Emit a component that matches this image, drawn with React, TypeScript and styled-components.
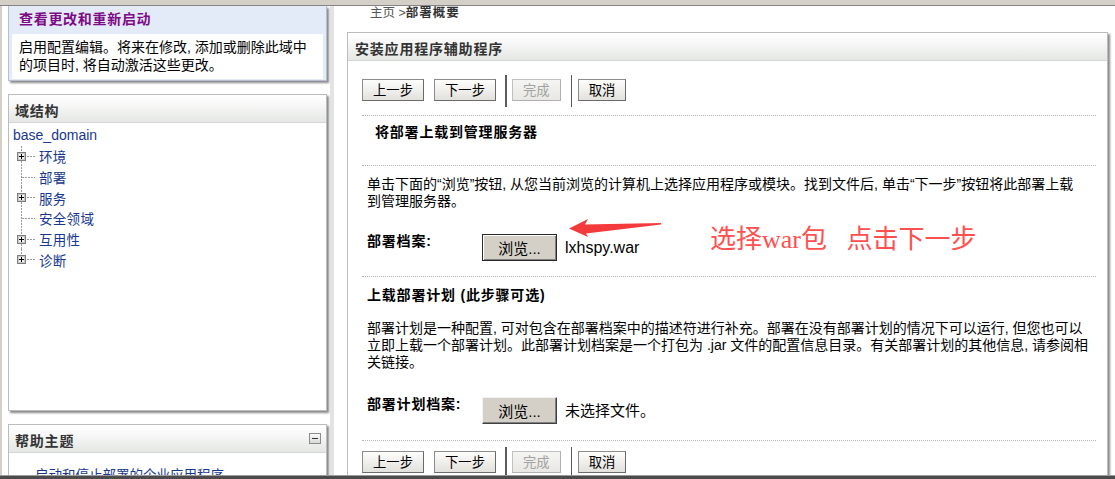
import React from "react";
import styled, { createGlobalStyle } from "styled-components";

const GlobalStyle = createGlobalStyle`
  html, body { margin: 0; padding: 0; background: #fff; }
  body {
    font-family: "Liberation Sans", "Noto Sans CJK SC", sans-serif;
    font-size: 14px;
    color: #000;
    overflow: hidden;
  }
  * { box-sizing: border-box; }
`;

const Page = styled.div`
  width: 1115px;
  height: 479px;
  display: flex;
  flex-direction: column;
  overflow: hidden;
  background: #fff;
`;

const TopBar = styled.div`
  flex: none;
  height: 6px;
  background: #d4d0c8;
  border-bottom: 1px solid #858585;
`;

const Workspace = styled.div`
  flex: 1;
  min-height: 0;
  display: flex;
`;

const BottomEdge = styled.div`
  flex: none;
  height: 4px;
  background: #4b4b4b;
  border-top: 1px solid #9a9a9a;
`;

const LeftFrame = styled.aside`
  flex: none;
  width: 330px;
  border-left: 2px solid #d4d0c8;
  padding: 0 3px 0 6px;
  display: flex;
  flex-direction: column;
  gap: 13px;
  overflow: hidden;
`;

const Splitter = styled.div`
  flex: none;
  width: 4px;
  background: #e3e3e3;
`;

const Content = styled.main`
  flex: 1;
  min-width: 0;
  padding: 0 7px 0 13px;
  display: flex;
  flex-direction: column;
  overflow: hidden;
`;

/* ---------- panels ---------- */

const Panel = styled.section`
  flex: none;
  background: #fff;
  border: 1px solid #b9bdbd;
  box-shadow: 2px 2px 2px #8a8a8a;
`;

const ChangePanel = styled.section`
  flex: none;
  background: #e4ebf8;
  border: 1px solid #b6bfd0;
  border-top: none;
  padding: 0 3px 1px 3px;
  box-shadow: 2px 2px 2px #8a8a8a;
`;

const ChangeTitle = styled.h2`
  margin: 0;
  height: 28px;
  padding: 0 0 0 7px;
  line-height: 26px;
  font-size: 14px;
  font-weight: bold;
  letter-spacing: 0.7px;
  color: #7d0a86;
`;

const ChangeBody = styled.div`
  background: #fff;
  padding: 4px 0 5px 7px;
  line-height: 18px;
  font-size: 14px;
  white-space: nowrap;
`;

const PanelHeader = styled.header<{ $pad?: number }>`
  height: 28px;
  display: flex;
  align-items: center;
  justify-content: space-between;
  padding: 0 5px 0 ${(p) => p.$pad ?? 6}px;
  background: linear-gradient(#ffffff, #f7f8f7 35%, #e5e7e4);
  border-bottom: 1px solid #d3d6d4;
`;

const HeaderTitle = styled.h2`
  margin: 0;
  font-size: 14px;
  font-weight: bold;
  letter-spacing: 0.8px;
  color: #333;
  padding-top: 2px;
`;

const CollapseBox = styled.span`
  position: relative;
  width: 12px;
  height: 11px;
  border: 1px solid #8b8b8b;
  background: linear-gradient(#fafafa, #d9d9d9);
  &::after {
    content: "";
    position: absolute;
    left: 2px;
    right: 2px;
    top: 4px;
    height: 1px;
    background: #333;
  }
`;

const TreeBody = styled.div`
  height: 287px;
  padding: 2px 0 0 4px;
`;

const TreeRoot = styled.div`
  height: 21px;
  line-height: 21px;
  font-size: 14px;
  color: #17388f;
`;

const TreeRow = styled.div`
  height: 20.7px;
  display: flex;
  align-items: center;
  margin-left: -1px;
  font-size: 13.5px;
  letter-spacing: 0.3px;
  color: #17388f;
  svg { display: block; flex: none; overflow: visible; }
`;

const HelpBody = styled.div`
  height: 60px;
  padding: 14px 0 0 26px;
  line-height: 17px;
  font-size: 13.5px;
  color: #17388f;
`;

/* ---------- right side ---------- */

const Breadcrumb = styled.nav`
  flex: none;
  height: 26px;
  padding-left: 23px;
  line-height: 14px;
  font-size: 12.5px;
  color: #555;
  b {
    color: #333;
    letter-spacing: 1px;
  }
`;

const WizardPanel = styled(Panel)`
  flex: 1;
  min-height: 0;
  border-bottom: none;
`;

const WizardBody = styled.div`
  padding: 0 11px 0 14px;
`;

const Toolbar = styled.div<{ $top: number }>`
  display: flex;
  align-items: flex-start;
  height: 32px;
  margin-top: ${(p) => p.$top}px;
`;

const WizButton = styled.button<{ $disabled?: boolean }>`
  margin-top: 4px;
  height: 22px;
  padding: 0 10px;
  font-family: "Liberation Sans", "Noto Sans CJK SC", sans-serif;
  font-size: 13.33px;
  line-height: 19px;
  color: ${(p) => (p.$disabled ? "#a2a2a2" : "#000")};
  background: ${(p) =>
    p.$disabled
      ? "linear-gradient(#f5f5f3, #e8e7e3)"
      : "linear-gradient(#fdfdfc, #e2e1dc)"};
  border: 1px solid ${(p) => (p.$disabled ? "#c0c0c0" : "#8c8c8c")};
  border-bottom-color: ${(p) => (p.$disabled ? "#b0b0b0" : "#6a6a6a")};
  border-right-color: ${(p) => (p.$disabled ? "#b0b0b0" : "#6a6a6a")};
  border-radius: 0;
`;

const ToolSep = styled.span<{ $w: number; $ml: number; $mr: number }>`
  flex: none;
  width: ${(p) => p.$w}px;
  height: 32px;
  background: #5c5c5c;
  margin: 0 ${(p) => p.$mr}px 0 ${(p) => p.$ml}px;
`;

const Rule = styled.hr<{ $top: number }>`
  margin: ${(p) => p.$top}px 0 0 0;
  height: 0;
  border: none;
  border-top: 1px dotted #b5b5b5;
`;

const SectionTitle = styled.h3<{ $top: number; $indent: number }>`
  margin: ${(p) => p.$top}px 0 0 0;
  padding-left: ${(p) => p.$indent}px;
  font-size: 14px;
  line-height: 17px;
  font-weight: bold;
  letter-spacing: 0.8px;
  color: #000;
`;

const Paragraph = styled.p<{ $top: number }>`
  margin: ${(p) => p.$top}px 0 0 0;
  padding-left: 5px;
  font-size: 14px;
  line-height: 17px;
  white-space: nowrap;
`;

const FieldRow = styled.div<{ $top: number }>`
  position: relative;
  margin-top: ${(p) => p.$top}px;
  padding-left: 5px;
  display: flex;
  align-items: flex-start;
`;

const FieldLabel = styled.span`
  flex: none;
  width: 115px;
  padding-top: 1px;
  font-size: 14px;
  line-height: 13px;
  font-weight: bold;
  letter-spacing: 0.8px;
`;

const BrowseButton = styled.button<{ $focused?: boolean }>`
  flex: none;
  width: 75px;
  height: 27px;
  padding: 0;
  font-family: "Liberation Sans", "Noto Sans CJK SC", sans-serif;
  font-size: 15px;
  color: #000;
  background: #d4d0c8;
  border: 1px solid;
  border-color: ${(p) =>
    p.$focused ? "#2a2a2a" : "#f2f2f2 #404040 #404040 #f2f2f2"};
  box-shadow: ${(p) =>
    p.$focused
      ? "inset 1px 1px #ffffff, inset -1px -1px #808080"
      : "inset -1px -1px #808080"};
  border-radius: 0;
`;

const FileName = styled.span<{ $latin?: boolean }>`
  margin-left: 8px;
  line-height: 27px;
  font-size: ${(p) => (p.$latin ? 16 : 15)}px;
  color: #000;
`;

const ArrowMark = styled.svg`
  position: absolute;
  left: 204px;
  top: -18px;
`;

const AnnotationText = styled.span`
  position: absolute;
  left: 348px;
  top: -9px;
  line-height: 30px;
  font-size: 26px;
  font-family: "Liberation Serif", "Noto Sans CJK SC", serif;
  color: #ff5050;
  white-space: nowrap;
`;

/* ---------- pieces ---------- */

type TreeItem = { label: string; expandable: boolean };

const treeItems: TreeItem[] = [
  { label: "环境", expandable: true },
  { label: "部署", expandable: false },
  { label: "服务", expandable: true },
  { label: "安全领域", expandable: false },
  { label: "互用性", expandable: true },
  { label: "诊断", expandable: true },
];

function Connector({ expandable, last }: { expandable: boolean; last: boolean }) {
  const dash = "#9a9a9a";
  return (
    <svg width="27" height="21" viewBox="0 0 27 21" shapeRendering="crispEdges">
      <line x1="9.5" y1="0" x2="9.5" y2={last ? 10.5 : 21} stroke={dash} strokeDasharray="2 1" />
      {expandable ? (
        <>
          <line x1="15" y1="10.5" x2="23" y2="10.5" stroke={dash} strokeDasharray="2 1" />
          <rect x="5.5" y="6.5" width="8" height="8" fill="#f2f2f2" stroke="#7f7f7f" />
          <rect x="6.5" y="7.5" width="6" height="6" fill="none" stroke="#c8c8c8" />
          <line x1="7" y1="10.5" x2="12" y2="10.5" stroke="#000" />
          <line x1="9.5" y1="8" x2="9.5" y2="13" stroke="#000" />
        </>
      ) : (
        <line x1="9.5" y1="10.5" x2="23" y2="10.5" stroke={dash} strokeDasharray="2 1" />
      )}
    </svg>
  );
}

function Buttons({ top }: { top: number }) {
  return (
    <Toolbar $top={top}>
      <WizButton>上一步</WizButton>
      <WizButton style={{ marginLeft: 10 }}>下一步</WizButton>
      <ToolSep $w={2} $ml={9} $mr={5} />
      <WizButton $disabled>完成</WizButton>
      <ToolSep $w={1} $ml={10} $mr={6} />
      <WizButton>取消</WizButton>
    </Toolbar>
  );
}

export default function App() {
  return (
    <Page>
      <GlobalStyle />
      <TopBar />
      <Workspace>
        <LeftFrame>
          <ChangePanel>
            <ChangeTitle>查看更改和重新启动</ChangeTitle>
            <ChangeBody>
              启用配置编辑。将来在修改, 添加或删除此域中
              <br />
              的项目时, 将自动激活这些更改。
            </ChangeBody>
          </ChangePanel>

          <Panel>
            <PanelHeader>
              <HeaderTitle>域结构</HeaderTitle>
            </PanelHeader>
            <TreeBody>
              <TreeRoot>base_domain</TreeRoot>
              {treeItems.map((item, i) => (
                <TreeRow key={item.label}>
                  <Connector expandable={item.expandable} last={i === treeItems.length - 1} />
                  {item.label}
                </TreeRow>
              ))}
            </TreeBody>
          </Panel>

          <Panel>
            <PanelHeader>
              <HeaderTitle>帮助主题</HeaderTitle>
              <CollapseBox />
            </PanelHeader>
            <HelpBody>启动和停止部署的企业应用程序</HelpBody>
          </Panel>
        </LeftFrame>

        <Splitter />

        <Content>
          <Breadcrumb>
            主页 &gt;<b>部署概要</b>
          </Breadcrumb>
          <WizardPanel>
            <PanelHeader $pad={7}>
              <HeaderTitle>安装应用程序辅助程序</HeaderTitle>
            </PanelHeader>
            <WizardBody>
              <Buttons top={14} />
              <Rule $top={8} />
              <SectionTitle $top={8} $indent={13}>
                将部署上载到管理服务器
              </SectionTitle>
              <Rule $top={24} />
              <Paragraph $top={10}>
                单击下面的“浏览”按钮, 从您当前浏览的计算机上选择应用程序或模块。找到文件后, 单击“下一步”按钮将此部署上载
                <br />
                到管理服务器。
              </Paragraph>
              <FieldRow $top={24}>
                <FieldLabel>部署档案:</FieldLabel>
                <BrowseButton $focused>浏览...</BrowseButton>
                <FileName $latin>lxhspy.war</FileName>
                <ArrowMark width="100" height="26" viewBox="0 0 100 26">
                  <polygon
                    points="3,12.5 22,3 19,8.5 95,7 95,8.6 20,17.5 22,21"
                    fill="#f43b3b"
                  />
                </ArrowMark>
                <AnnotationText>选择war包&nbsp;&nbsp;&nbsp;点击下一步</AnnotationText>
              </FieldRow>
              <Rule $top={15} />
              <SectionTitle $top={10} $indent={5}>
                上载部署计划 (此步骤可选)
              </SectionTitle>
              <Paragraph $top={16}>
                部署计划是一种配置, 可对包含在部署档案中的描述符进行补充。部署在没有部署计划的情况下可以运行, 但您也可以
                <br />
                立即上载一个部署计划。此部署计划档案是一个打包为 .jar 文件的配置信息目录。有关部署计划的其他信息, 请参阅相
                <br />
                关链接。
              </Paragraph>
              <FieldRow $top={26}>
                <FieldLabel>部署计划档案:</FieldLabel>
                <BrowseButton>浏览...</BrowseButton>
                <FileName>未选择文件。</FileName>
              </FieldRow>
              <Rule $top={16} />
              <Buttons top={6} />
            </WizardBody>
          </WizardPanel>
        </Content>
      </Workspace>
      <BottomEdge />
    </Page>
  );
}
